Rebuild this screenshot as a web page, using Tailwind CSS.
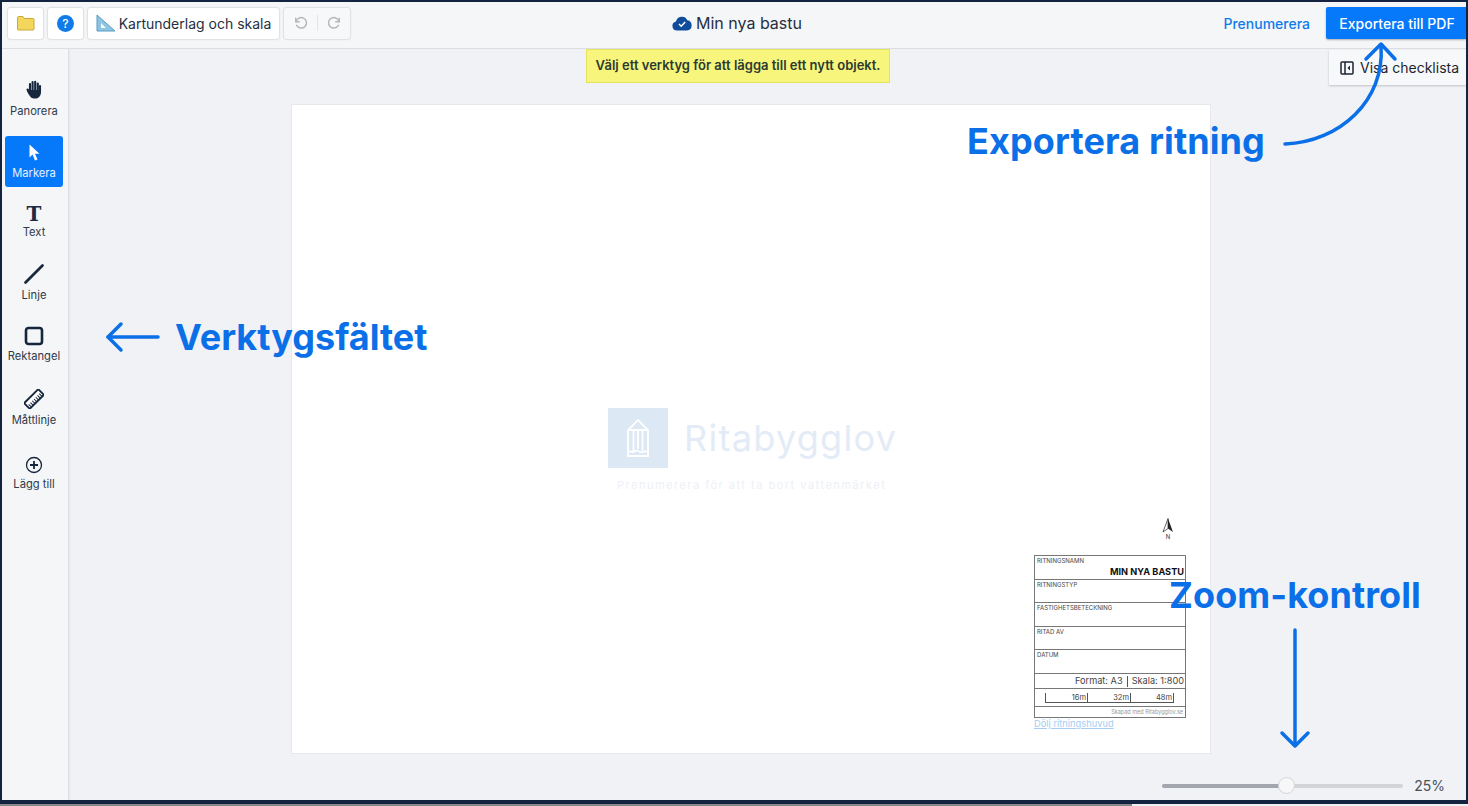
<!doctype html>
<html>

<head>
  <meta charset="UTF-8">
  <script src="https://cdn.jsdelivr.net/npm/@tailwindcss/browser@4"></script>
</head>

<body class="w-[1468px] h-[806px] overflow-hidden bg-[#14233f] font-['Inter','Liberation_Sans',sans-serif]">

  <div class="relative w-[1464px] h-[798px] mt-[2px] ml-[2px] flex flex-col bg-[#f0f2f6] overflow-hidden">

    <!-- top bar -->
    <div class="h-[47px] shrink-0 flex items-center justify-between bg-[#f5f6f8] border-b border-[#dcdee2] pl-[6px] pb-[4px] relative">
      <div class="flex items-center gap-[5px]">
        <div class="w-[35px] h-[31px] flex items-center justify-center bg-white rounded-[2px] shadow-[0_0_2px_rgba(0,0,0,0.3)]">
          <svg width="18" height="16" viewBox="0 0 18 16"><path d="M0.500 2.500a1 1 0 0 1 1-1h4.500l1.500 2h8.500a1 1 0 0 1 1 1v9.500a1 1 0 0 1-1 1h-14.500a1 1 0 0 1-1-1z" fill="#f2d75c" stroke="#c9a93a"/></svg>
        </div>
        <div class="w-[35px] h-[31px] flex items-center justify-center bg-white rounded-[2px] shadow-[0_0_2px_rgba(0,0,0,0.3)]">
          <div class="w-[17px] h-[17px] rounded-full bg-[#0f7be8] text-white text-[12px] font-medium leading-[17px] text-center">?</div>
        </div>
        <div class="h-[31px] w-[191px] flex items-center justify-center gap-[3px] bg-white rounded-[2px] shadow-[0_0_2px_rgba(0,0,0,0.3)]">
          <svg width="20" height="18" viewBox="0 0 20 18"><path d="M1 1v16h18z" fill="#8cc4e2" stroke="#5a9cc4"/><path d="M5 9v5h5z" fill="#f5f6f8"/></svg>
          <span class="text-[14px] text-[#26303f]">Kartunderlag och skala</span>
        </div>
        <div class="h-[31px] w-[66px] flex items-center justify-center gap-[9px] bg-[#f7f8f9] rounded-[2px] shadow-[0_0_2px_rgba(0,0,0,0.3)]">
          <svg width="14" height="14" viewBox="0 0 24 24" fill="none" stroke="#b4b7bc" stroke-width="2.500" stroke-linecap="round" stroke-linejoin="round"><path d="M3 4v6h6"/><path d="M3.500 10a9 9 0 1 1 1 6"/></svg>
          <div class="w-px h-[16px] bg-[#e2e4e7]"></div>
          <svg width="14" height="14" viewBox="0 0 24 24" fill="none" stroke="#b4b7bc" stroke-width="2.500" stroke-linecap="round" stroke-linejoin="round"><path d="M21 4v6h-6"/><path d="M20.500 10a9 9 0 1 0-1 6"/></svg>
        </div>
      </div>

      <div class="absolute left-[670px] top-0 h-[42px] flex items-center gap-[4px]">
        <svg width="20" height="15" viewBox="0 0 20 15"><path d="M5 14.500a4.500 4.500 0 0 1-1-8.900 6 6 0 0 1 11.300-1.400 5.200 5.200 0 0 1 -.3 10.300z" fill="#0f4c9c"/><path d="M7 8l2.200 2.200 4-4.200" fill="none" stroke="#fff" stroke-width="1.500"/></svg>
        <span class="text-[16px] text-[#26303f]">Min nya bastu</span>
      </div>

      <div class="flex items-center h-full">
        <span class="text-[14px] text-[#0f7be8] font-medium mr-[16px]">Prenumerera</span>
        <div class="w-[140px] h-[32px] flex items-center justify-center pl-[2px] bg-[#0679fb] rounded-l-[2px] text-[14px] text-white font-medium shadow-[0_1px_2px_rgba(0,0,0,0.3)]">Exportera till PDF</div>
      </div>
    </div>

    <div class="flex flex-1 min-h-0">
      <!-- tool bar -->
      <div class="w-[67px] shrink-0 bg-[#f5f6f8] border-r border-[#dcdee2] shadow-[1px_0_2px_rgba(0,0,0,0.05)] flex flex-col items-center pt-[31px] pr-[2px] text-[11.200px] leading-[16px] text-[#2f3a4a]">
        <div class="flex flex-col items-center h-[56px]">
          <svg width="16" height="19" viewBox="0 0 16 19"><path d="M4 11V4M6.600 10V2M9.200 10V1.800M11.800 10.500V3.500M14 11.500V6" stroke="#16263c" stroke-width="2.100" stroke-linecap="round"/><path d="M3 9.500C2.200 8.500 0.500 8 0.500 9.500c0 1.500 2 4.500 3 6 1 1.700 2.500 3 4.500 3h1.500c3 0 5.500-2.500 5.500-6.500V10H3z" fill="#16263c"/></svg>
          <span class="mt-[4px]">Panorera</span>
        </div>
        <div class="w-[58px] h-[51px] rounded-[3px] bg-[#0679fb] flex flex-col items-center pt-[8px] text-white">
          <svg width="11" height="18" viewBox="0 0 11 18" fill="#fff"><path d="M0.500 0.500v13l3-3 2.500 6 2.500-1-2.500-5.800h4.500z"/></svg>
          <span class="mt-[3px] text-[#e8f2ff]">Markera</span>
        </div>
        <div class="flex flex-col items-center h-[62px] pt-[17px]">
          <span class="font-['DejaVu_Serif',serif] font-bold text-[20px] leading-[20px] text-[#1c2b40]">T</span>
          <span>Text</span>
        </div>
        <div class="flex flex-col items-center h-[62px] pt-[15px]">
          <svg width="20" height="20" viewBox="0 0 20 20"><path d="M1.500 18.500l17-17" stroke="#16263c" stroke-width="2.600" stroke-linecap="round"/></svg>
          <span class="mt-[3px]">Linje</span>
        </div>
        <div class="flex flex-col items-center h-[62px] pt-[15px]">
          <svg width="20" height="20" viewBox="0 0 20 20"><rect x="2" y="2" width="16" height="16" rx="2.500" fill="none" stroke="#16263c" stroke-width="2.600"/></svg>
          <span class="mt-[2px]">Rektangel</span>
        </div>
        <div class="flex flex-col items-center h-[64px] pt-[16px]">
          <svg width="20" height="20" viewBox="0 0 20 20"><g transform="rotate(45 10 10)"><rect x="6" y="0" width="8" height="20" rx="1" fill="#fff" stroke="#16263c" stroke-width="1.900"/><path d="M10 2.500h4M10 5h4M10 7.500h4M10 10h4M10 12.500h4M10 15h4M10 17.500h4" stroke="#16263c" stroke-width="1"/></g></svg>
          <span class="mt-[3px]">Måttlinje</span>
        </div>
        <div class="flex flex-col items-center pt-[19px]">
          <svg width="18" height="18" viewBox="0 0 18 18" fill="none" stroke="#16263c"><circle cx="9" cy="9" r="7.500" stroke-width="1.300"/><path d="M9 5v8M5 9h8" stroke-width="1.800"/></svg>
          <span class="mt-[2px]">Lägg till</span>
        </div>
      </div>

      <!-- canvas -->
      <div class="flex-1 relative">
        <div class="absolute left-[222px] top-[55px] w-[920px] h-[650px] bg-white border border-[#e6e8ec]">
          <!-- watermark -->
          <div class="absolute left-[316px] top-[303px] flex items-center gap-[16px]">
            <div class="w-[60px] h-[60px] bg-[#dde8f5] flex items-center justify-center">
              <svg width="22" height="38" viewBox="0 0 22 38" fill="none" stroke="#fff" stroke-width="1.800"><path d="M1 37V11L11 1l10 10v26z"/><path d="M1 11h20M6.500 11v21M11 11v19M15.500 11v21M1 33c3-2 4 1 5.500 0s3-2 4.500-1 3 2 5 1 3-1 5 0"/></svg>
            </div>
            <span class="text-[36px] leading-none tracking-[1.300px] text-[#e3ebf6]">Ritabygglov</span>
          </div>
          <div class="absolute left-[325px] top-[372px] text-[11px] tracking-[1.500px] text-[#edf0f6] whitespace-nowrap">Prenumerera för att ta bort vattenmärket</div>

          <!-- north arrow -->
          <div class="absolute left-[870px] top-[413px] flex flex-col items-center">
            <svg width="12" height="15" viewBox="0 0 12 15"><path d="M6 0.500L1 14l5-3.500z" fill="#fff" stroke="#222" stroke-width="0.700"/><path d="M6 0.500L11 14l-5-3.500z" fill="#222"/></svg>
            <span class="text-[6px] leading-[7px] text-[#333]">N</span>
          </div>

          <!-- drawing head -->
          <div class="absolute left-[742px] top-[450px] w-[152px] border border-[#777] text-[#444]">
            <div class="h-[24px] border-b border-[#777] relative px-[2px] text-[6px] leading-[10px]">RITNINGSNAMN
              <div class="absolute right-[1px] top-[10px] text-[9.200px] leading-[12px] font-bold text-[#111]">MIN NYA BASTU</div>
            </div>
            <div class="h-[23px] border-b border-[#777] px-[2px] text-[6px] leading-[10px]">RITNINGSTYP</div>
            <div class="h-[24px] border-b border-[#777] px-[2px] text-[6px] leading-[10px]">FASTIGHETSBETECKNING</div>
            <div class="h-[23px] border-b border-[#777] px-[2px] text-[6px] leading-[10px]">RITAD AV</div>
            <div class="h-[24px] border-b border-[#777] px-[2px] text-[6px] leading-[10px]">DATUM</div>
            <div class="h-[15px] border-b border-[#777] flex items-center justify-end pr-[1px] text-[9.200px]">Format: A3<span class="w-px h-[11px] bg-[#555] mx-[4px]"></span>Skala: 1:800</div>
            <div class="h-[18px] border-b border-[#777] flex items-center pl-[10px] text-[7.500px]">
              <div class="w-[43px] h-[10px] border-l border-r border-b border-[#555] text-right pr-[1px] leading-[10px]">16m</div>
              <div class="w-[43px] h-[10px] border-r border-b border-[#555] text-right pr-[1px] leading-[10px]">32m</div>
              <div class="w-[43px] h-[10px] border-r border-b border-[#555] text-right pr-[1px] leading-[10px]">48m</div>
            </div>
            <div class="h-[10px] text-right pr-[2px] text-[5.500px] leading-[10px] text-[#999]">Skapad med Ritabygglov.se</div>
          </div>
          <div class="absolute left-[742px] top-[613px] text-[9.300px] leading-[12px] underline text-[#a5cdf3]">Dölj ritningshuvud</div>
        </div>

        <!-- zoom slider -->
        <div class="absolute right-[21px] top-[726px] flex items-center gap-[11px]">
          <div class="relative w-[241px] h-[4px] rounded-full bg-[#d3d4d8]">
            <div class="w-[120px] h-[4px] rounded-full bg-[#a3a6ae]"></div>
            <div class="absolute left-[116px] top-[-7px] w-[17px] h-[17px] rounded-full bg-[#f7f7f8] border border-[#d3d4d8]"></div>
          </div>
          <span class="text-[14px] text-[#4a4f58]">25%</span>
        </div>
      </div>
    </div>

    <!-- hint -->
    <div class="absolute left-[584px] top-[47px] w-[304px] h-[34px] flex items-center justify-center bg-[#f7f57c] border border-[#e4e25f] text-[13px] font-semibold text-[#2c3a30]">Välj ett verktyg för att lägga till ett nytt objekt.</div>

    <!-- checklist -->
    <div class="absolute right-0 top-[48px] w-[137px] h-[35px] flex items-center pl-[11px] gap-[6px] bg-[#f7f8f9] shadow-[0_1px_2px_rgba(0,0,0,0.2)] text-[14px] text-[#1d2530]">
      <svg width="14" height="14" viewBox="0 0 14 14" fill="none" stroke="#1d2530" stroke-width="1.500"><rect x="1" y="1" width="12" height="12" rx="1"/><path d="M5 1v12"/><path d="M10 4.500v5L7.500 7z" fill="#1d2530" stroke="none"/></svg>
      <span>Visa checklista</span>
    </div>

    <!-- annotations -->
    <svg class="absolute left-[-2px] top-[-2px] pointer-events-none" width="1468" height="806" viewBox="0 0 1468 806" fill="none" stroke="#0b6fe8" stroke-linecap="round" stroke-linejoin="round" stroke-width="3.500">
      <path d="M158 337H108"/>
      <path d="M121 324L108 337l13 13"/>
      <path d="M1285 144C1340 142 1385 100 1381 46"/>
      <path d="M1366 59L1381 44l14 15"/>
      <path d="M1295 630V745"/>
      <path d="M1282 733L1295 746l13-13"/>
    </svg>
    <div class="absolute left-[965px] top-[117px] text-[36px] tracking-[0.120px] leading-[44px] font-bold text-[#0b6fe8] whitespace-nowrap">Exportera ritning</div>
    <div class="absolute left-[173px] top-[313px] text-[36px] leading-[44px] font-bold text-[#0b6fe8] whitespace-nowrap">Verktygsfältet</div>
    <div class="absolute left-[1167px] top-[571px] text-[36px] tracking-[0.080px] leading-[44px] font-bold text-[#0b6fe8] whitespace-nowrap">Zoom-kontroll</div>
  </div>

  <!-- window edge under the app -->
  <div class="flex h-[2px] mt-[4px]">
    <div class="w-[1132px] bg-[#85878b]"></div>
    <div class="flex-1 bg-[#eef0f4]"></div>
  </div>

</body>

</html>
